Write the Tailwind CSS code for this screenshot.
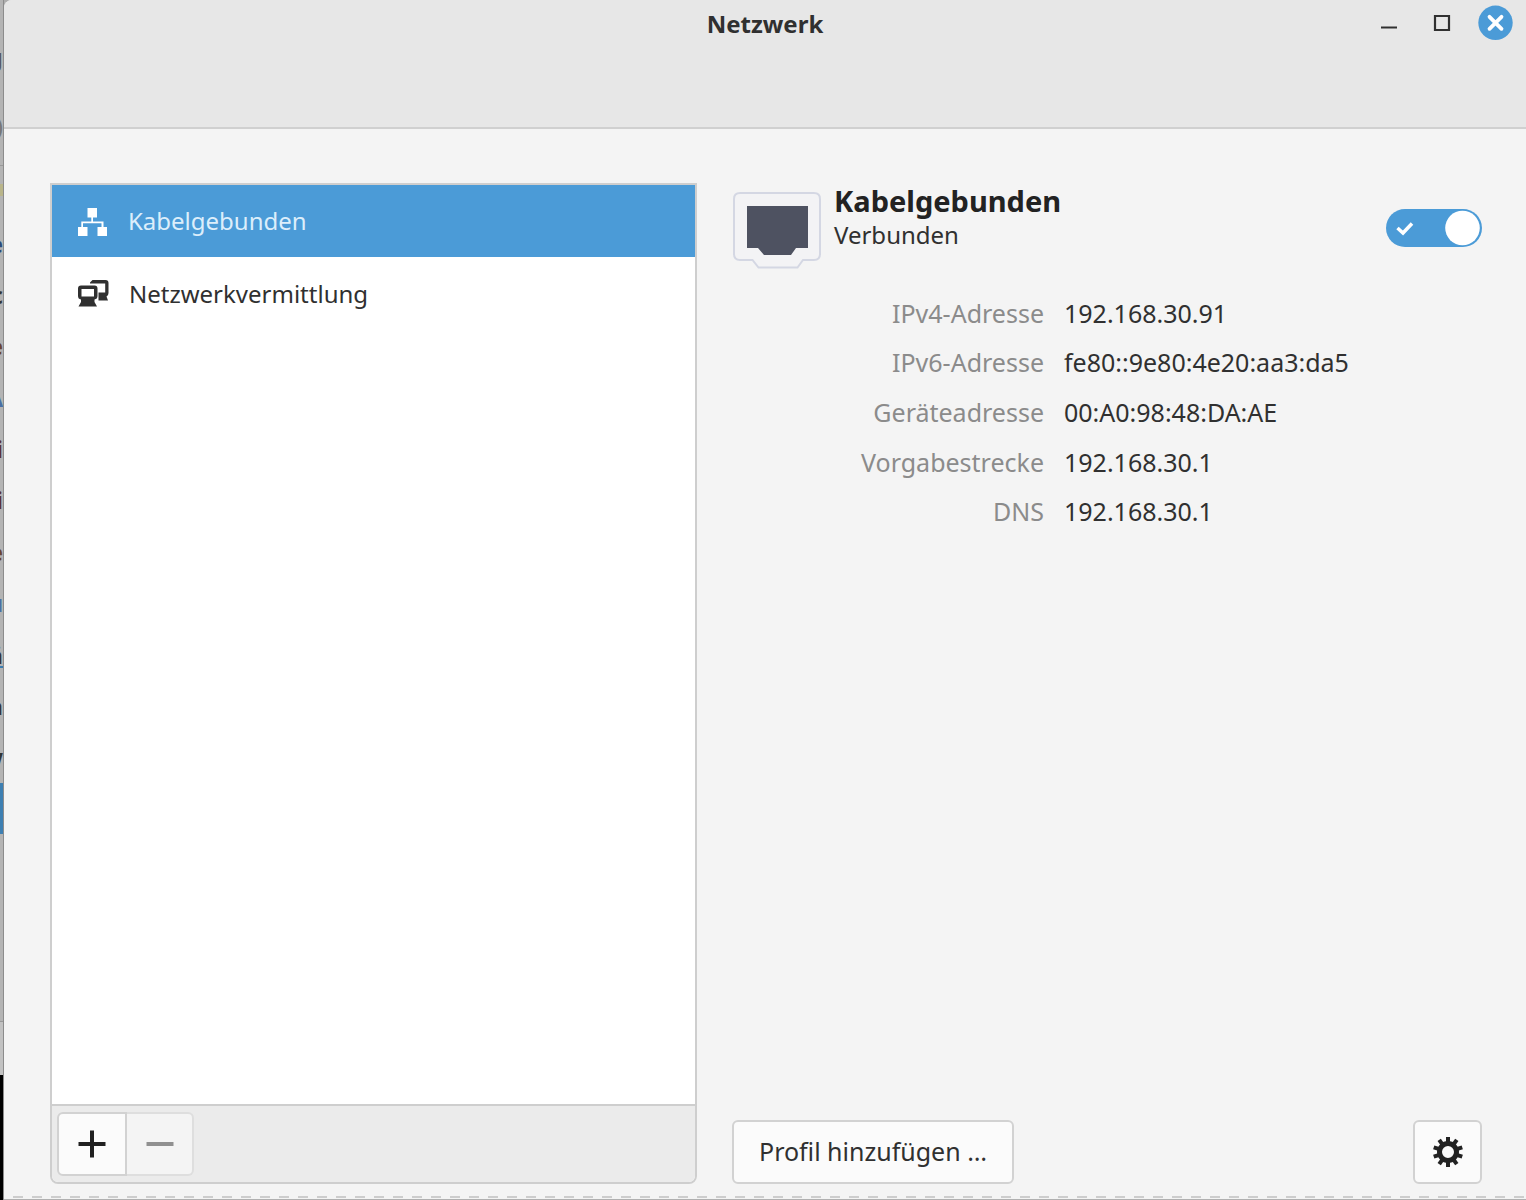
<!DOCTYPE html>
<html lang="de">
<head>
<meta charset="utf-8">
<meta name="viewport" content="width=device-width, initial-scale=1">
<title>Netzwerk</title>
<script src="https://cdn.jsdelivr.net/npm/@tailwindcss/browser@4"></script>
</head>
<body class="flex min-h-screen bg-[#adadad] font-['Noto_Sans',sans-serif] text-2xl text-[#303030]">

<!-- Edge of the window behind -->
<div class="flex w-1 shrink-0 flex-col overflow-hidden border-r border-[#8c8c8c] bg-[#b4b4b4]" aria-hidden="true">
  <div class="flex h-[86px] items-center justify-end pt-7 text-[#555]">g</div>
  <div class="flex h-[80px] items-center justify-end border-b border-[#999] text-[#777]">)</div>
  <div class="h-[52px] pt-[18px]"><div class="h-3 bg-[#b9b58a]"></div></div>
  <div class="flex h-[565px] flex-col font-bold text-[#333] *:flex *:h-0 *:flex-1 *:items-center *:justify-end">
    <span class="text-[#2b4a78]">e</span>
    <span>c</span>
    <span class="text-[#6b4430]">e</span>
    <span class="text-[#4a6fa5]">A</span>
    <span class="text-[#5a3030]">i</span>
    <span class="text-[#5a3030]">i</span>
    <span class="text-[#6b4430]">e</span>
    <span class="text-[#4a6fa5]">ü</span>
    <span class="underline decoration-[#3a7cb0]">ä</span>
    <span>a</span>
    <span>w</span>
  </div>
  <div class="h-[51px] bg-[#3d7fb2]"></div>
  <div class="h-[188px] border-b border-[#999]"></div>
  <div class="h-[53px] bg-[#c2c2c2]"></div>
  <div class="flex-1 bg-black"></div>
</div>

<div class="flex min-w-0 flex-1 flex-col rounded-tl-lg border-b border-[#b0b0b0] bg-[#f4f4f4]">
  <header class="relative h-[129px] rounded-tl-lg border-b-2 border-[#d0d0d0] bg-[#e7e7e7]">
    <h1 class="pt-1 text-center text-2xl leading-10 font-bold">Netzwerk</h1>
    <div class="absolute top-1 right-3 flex items-center gap-[18px]">
      <button type="button" aria-label="Minimieren" class="size-9"><svg class="size-9" viewBox="0 0 36 36" fill="none" stroke="#303030" stroke-width="2"><path d="M11 23.500h16"/></svg></button>
      <button type="button" aria-label="Maximieren" class="size-9"><svg class="size-9" viewBox="0 0 36 36" fill="none" stroke="#303030" stroke-width="2.200"><path d="M11 12h14v14H11z"/></svg></button>
      <button type="button" aria-label="Schließen" class="size-9"><svg class="size-9" viewBox="0 0 36 36"><circle cx="17.500" cy="18.800" r="17.200" fill="#4b9bd7"/><path d="M11.500 12.800l12 12m0-12l-12 12" stroke="#fff" stroke-width="3.800" stroke-linecap="round"/></svg></button>
    </div>
  </header>

  <main class="grid flex-1 grid-cols-[minmax(0,647fr)_minmax(0,750fr)] gap-[35px] pt-[54px] pr-11 pb-3 pl-[46px]">
    <nav class="flex flex-col overflow-hidden rounded-b-lg border-2 border-[#cecece] bg-white" aria-label="Netzwerkgeräte">
      <ul class="flex-1">
        <li><a href="#kabel" aria-current="page" class="flex h-[72px] items-center gap-5 bg-[#4b9bd7] pl-[26px] text-[#dceefb]">
          <svg class="size-[30px]" viewBox="0 0 30 30" fill="#fff"><path d="M9.500 2H19v9.500h-4v4h10.500V21H29v9h-9.500v-9h4v-3.800H5V21h4.500v9H0v-9h3.300v-5.500H13.300v-4H9.500z"/></svg>
          Kabelgebunden</a></li>
        <li><a href="#proxy" class="flex h-[73px] items-center gap-5 pl-[26px]">
          <svg class="h-[30px] w-[31px]" viewBox="0 0 31 30" fill="#303030"><path d="M12 4.500V3.500L14.500 1H27.500Q30.500 1 30.500 4V14Q30.500 16.500 28.500 17.500L30 21.500H20.500V13.500H27.200V4.500z"/><path fill-rule="evenodd" d="M3 6.500H16.500Q19.500 6.500 19.500 9.500V17Q19.500 20 16.500 20.500V23L19 27.500H.500L3 23V20.500Q0 20 0 17V9.500Q0 6.500 3 6.500zM3.500 10V17.500H16V10z"/></svg>
          Netzwerkvermittlung</a></li>
      </ul>
      <div class="flex h-[78px] border-t-2 border-[#cecece] bg-[#ebebeb] px-[5px] py-1.5">
        <button type="button" aria-label="Hinzufügen" class="flex h-16 w-[70px] items-center justify-center rounded-l-md border-2 border-[#d2d2d2] bg-[#fbfbfb]"><svg class="size-7" viewBox="0 0 28 28" stroke="#202020" stroke-width="4"><path d="M0.500 14h27M14 0.500v27"/></svg></button>
        <button type="button" aria-label="Entfernen" disabled class="flex h-16 w-[67px] items-center justify-center rounded-r-md border-2 border-l-0 border-[#dedede] bg-[#f4f4f4]"><svg class="size-7" viewBox="0 0 28 28" stroke="#909090" stroke-width="4"><path d="M0.500 14h27"/></svg></button>
      </div>
    </nav>

    <section class="flex flex-col">
      <div class="flex items-start">
        <svg class="mt-2 h-20 w-[90px] shrink-0" viewBox="0 0 90 80"><path d="M8 2h74q6 0 6 6v55q0 6-6 6H71l-5.500 7.500H26.500L20.500 69H8q-6 0-6-6V8q0-6 6-6z" fill="#f3f3f5" stroke="#d4d7e3" stroke-width="2"/><path d="M15 15h61v42H64l-5 7H32l-6-7H15z" fill="#4e5261"/></svg>
        <div class="ml-3 flex-1">
          <h2 class="text-[29px] leading-9 font-bold text-[#222]">Kabelgebunden</h2>
          <p class="leading-8">Verbunden</p>
        </div>
        <label class="relative mt-[26px] block">
          <span class="sr-only">Kabelgebundene Verbindung</span>
          <input type="checkbox" role="switch" checked class="block h-[38px] w-24 appearance-none rounded-full bg-[#4b9bd7]">
          <svg class="pointer-events-none absolute inset-0 h-[38px] w-24" viewBox="0 0 96 38"><circle cx="76.500" cy="19" r="17.300" fill="#fff"/><path d="M11.500 19l5.500 5 9-9.500" fill="none" stroke="#fff" stroke-width="3.500"/></svg>
        </label>
      </div>
      <table class="mt-[17px] h-[248px] w-full text-[25px] leading-8">
        <tbody class="[&_th]:w-[332px] [&_th]:pr-5 [&_th]:text-right [&_th]:font-normal [&_th]:text-[#8b8b8b]">
          <tr><th scope="row">IPv4-Adresse</th><td>192.168.30.91</td></tr>
          <tr><th scope="row">IPv6-Adresse</th><td>fe80::9e80:4e20:aa3:da5</td></tr>
          <tr><th scope="row">Geräteadresse</th><td>00:A0:98:48:DA:AE</td></tr>
          <tr><th scope="row">Vorgabestrecke</th><td>192.168.30.1</td></tr>
          <tr><th scope="row">DNS</th><td>192.168.30.1</td></tr>
        </tbody>
      </table>
      <div class="mt-auto flex justify-between">
        <button type="button" class="h-16 w-[282px] rounded-md border-2 border-[#d2d2d2] bg-[#fbfbfb] text-[25px]">Profil hinzufügen …</button>
        <button type="button" aria-label="Einstellungen" class="flex h-16 w-[69px] items-center justify-center rounded-md border-2 border-[#d2d2d2] bg-[#fbfbfb]"><svg class="size-[30px]" viewBox="-15 -15 30 30" fill="none" stroke="#222"><circle r="8.500" stroke-width="5"/><g stroke-width="4"><path id="tooth" d="M0-15v6"/><use href="#tooth" transform="rotate(36)"/><use href="#tooth" transform="rotate(72)"/><use href="#tooth" transform="rotate(108)"/><use href="#tooth" transform="rotate(144)"/><use href="#tooth" transform="rotate(180)"/><use href="#tooth" transform="rotate(216)"/><use href="#tooth" transform="rotate(252)"/><use href="#tooth" transform="rotate(288)"/><use href="#tooth" transform="rotate(324)"/></g></svg></button>
      </div>
    </section>
  </main>
  <div class="mb-px h-0.5 bg-[repeating-linear-gradient(90deg,transparent_0_9px,#cdcdcd_9px_19px)]"></div>
</div>
</body>
</html>
